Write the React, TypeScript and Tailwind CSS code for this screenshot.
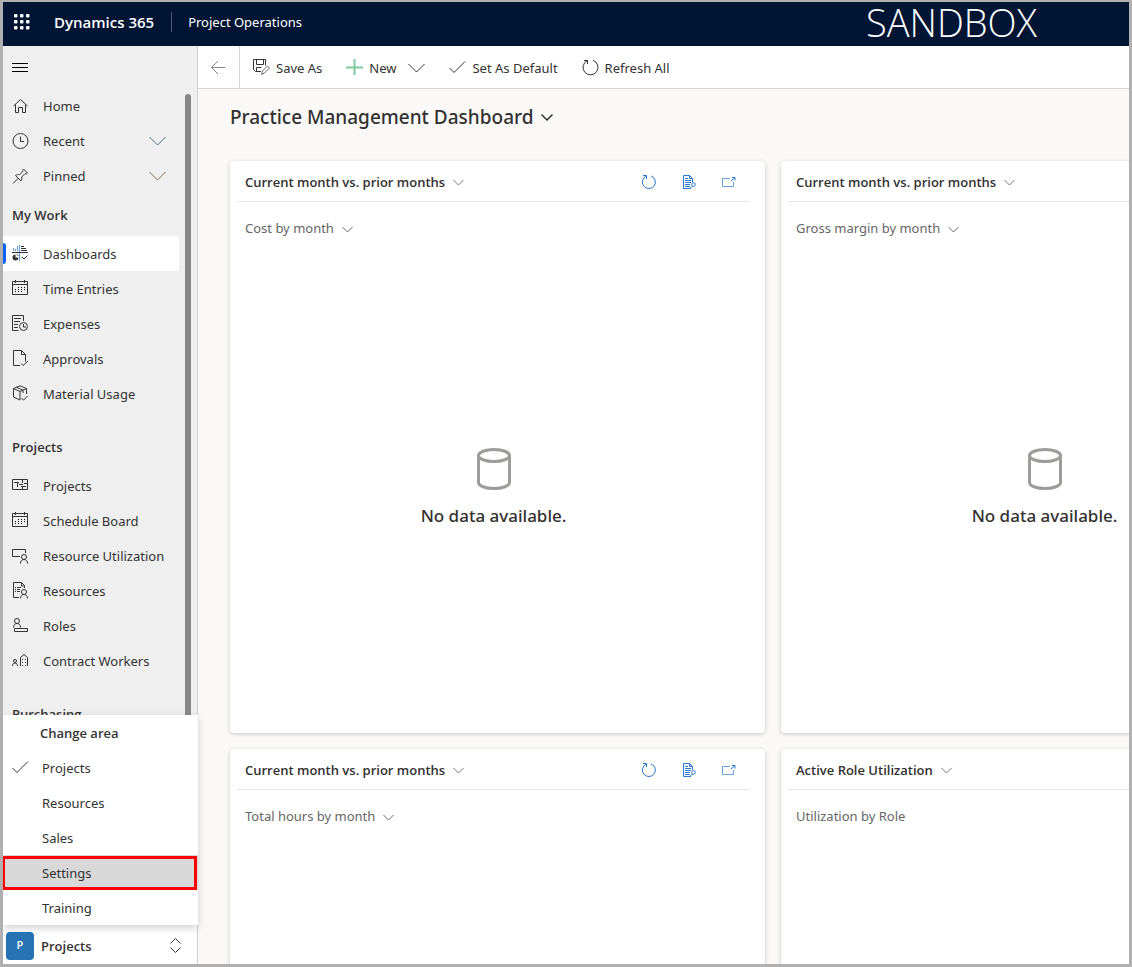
import type { ReactNode } from 'react';

type NavItem = { name: string; icon: ReactNode; active?: boolean };
type ChartCard = {
    title: string;
    chart: string;
    hasMenu: boolean;
    empty: boolean;
};

function Icon({
    children,
    className = '',
}: {
    children: ReactNode;
    className?: string;
}) {
    return (
        <svg
            className={`h-[17px] w-[17px] shrink-0 ${className}`}
            viewBox="0 0 17 17"
            fill="none"
            stroke="currentColor"
            aria-hidden="true"
        >
            {children}
        </svg>
    );
}

const Chevron = ({ className = '' }: { className?: string }) => (
    <Icon className={className}>
        <path d="M.5 5 8.500 13 16.500 5" />
    </Icon>
);

const SmallChevron = ({ className = '' }: { className?: string }) => (
    <svg
        className={`h-[7px] w-[11px] shrink-0 ${className}`}
        viewBox="0 0 11 7"
        fill="none"
        stroke="currentColor"
        aria-hidden="true"
    >
        <path d="M.5 1l5 5 5-5" />
    </svg>
);

const Check = () => (
    <Icon>
        <path d="M.5 9l4.500 4.500L16 2.500" />
    </Icon>
);

const Person = () => (
    <>
        <circle cx="12" cy="10" r="2.500" />
        <path d="M8.500 16.500c0-2.600 1.400-4 3.500-4s3.500 1.400 3.500 4" />
    </>
);

const CalendarIcon = () => (
    <Icon>
        <path d="M.5 1.500h15v13H.5zM.5 4.500h15M3.500 0v3M12.500 0v3" />
        <path
            d="M6 7.500h8M3 9.500h11M3 11.500h8"
            stroke="#000"
            strokeDasharray="1 2"
        />
    </Icon>
);

const quickLinks = [
    {
        name: 'Home',
        expandable: false,
        chevron: '',
        icon: (
            <Icon>
                <path d="M1.500 9 8.500 2.500 15.500 9M3.500 7.500v8h3v-5h4v5h3v-8" />
            </Icon>
        ),
    },
    {
        name: 'Recent',
        expandable: true,
        chevron: 'text-[#4f7187]',
        icon: (
            <Icon>
                <circle cx="8.500" cy="9" r="7.500" />
                <path d="M8.500 4.500v5H12" />
            </Icon>
        ),
    },
    {
        name: 'Pinned',
        expandable: true,
        chevron: 'text-[#80684c]',
        icon: (
            <Icon>
                <path d="M1 16.500 6.500 11M3.500 8.500c1.300-1 2.700-1.200 4-.8l3.300-3.200c-.3-1 0-1.700.7-2.500L15.500 6c-.8.800-1.600 1-2.500.7L9.700 10c.4 1.300.2 2.700-.8 4z" />
            </Icon>
        ),
    },
];

const groups: { title: string; items: NavItem[] }[] = [
    {
        title: 'My Work',
        items: [
            {
                name: 'Dashboards',
                active: true,
                icon: (
                    <Icon>
                        <path
                            d="M1.500 6V3M3.500 6V4M5.500 6V1M7.500 0v16"
                            stroke="#5f9fd6"
                        />
                        <path d="M0 7.500h16M9 1.500h3M9 3.500h5M9 5.500h6M10 12l2 2 3.500-3.500" />
                        <path
                            d="M3.500 9.500v3h3a3 3 0 1 1-3-3z"
                            fill="currentColor"
                            stroke="none"
                        />
                        <path d="M5 9.500l1.500 1.500" />
                    </Icon>
                ),
            },
            { name: 'Time Entries', icon: <CalendarIcon /> },
            {
                name: 'Expenses',
                icon: (
                    <Icon>
                        <path d="M11.500 6V.5H.5v15h6M2 3.500h7M2 6.500h6M2 9.500h4M2 12.500h4" />
                        <circle cx="11.500" cy="11.500" r="4" />
                        <path d="M11.500 9v3H14" />
                    </Icon>
                ),
            },
            {
                name: 'Approvals',
                icon: (
                    <Icon>
                        <path d="M8 15.500H1.500V.5h8l4 4v7M9.500.5v4h4M9 13.500l2 2 5-4.500" />
                    </Icon>
                ),
            },
            {
                name: 'Material Usage',
                icon: (
                    <Icon>
                        <path d="M14.500 9V3.500L8 .8 1.500 3.500v8.500L8 15V6.500L1.500 3.500M8 6.500l6.500-3M4.500 2.200l6.500 3v3M9.500 13l2 2.200 4-4.200" />
                    </Icon>
                ),
            },
        ],
    },
    {
        title: 'Projects',
        items: [
            {
                name: 'Projects',
                icon: (
                    <Icon>
                        <path d="M.5 2.500h15v10H.5zM2 5.500h5M5.500 5v5M7 7.500h4M10.500 3v3M9 9.500h5M10.500 10v2M12 6.500h3" />
                    </Icon>
                ),
            },
            { name: 'Schedule Board', icon: <CalendarIcon /> },
            {
                name: 'Resource Utilization',
                icon: (
                    <Icon>
                        <path d="M8 9.500H.5v-7h13V6" />
                        <Person />
                    </Icon>
                ),
            },
            {
                name: 'Resources',
                icon: (
                    <Icon>
                        <path d="M7 15.500H1.500V.5h8l3 3V6M9.500.5v3.500h3" />
                        <path d="M3 5.500h1M3 7.500h1M3 9.500h1M5 5.500h4M5 7.500h3M5 9.500h3" />
                        <Person />
                    </Icon>
                ),
            },
            {
                name: 'Roles',
                icon: (
                    <Icon>
                        <circle cx="5" cy="4" r="2.500" />
                        <path d="M1.500 10.500c0-2.600 1.400-4 3.500-4s3.500 1.400 3.500 4M2.500 11.500h13v3h-13z" />
                    </Icon>
                ),
            },
            {
                name: 'Contract Workers',
                icon: (
                    <Icon>
                        <circle cx="3" cy="9" r="1.500" />
                        <path d="M.5 14c0-2 1-3 2.500-3s2.500 1 2.500 3M8.500 14V5.500L12 2.500l3.500 3V14" />
                        <path
                            d="M10.500 7v7M13.500 7v7"
                            strokeDasharray="1 2"
                        />
                    </Icon>
                ),
            },
        ],
    },
    { title: 'Purchasing', items: [] },
];

const areas = ['Projects', 'Resources', 'Sales', 'Settings', 'Training'];

const cards: ChartCard[] = [
    {
        title: 'Current month vs. prior months',
        chart: 'Cost by month',
        hasMenu: true,
        empty: true,
    },
    {
        title: 'Current month vs. prior months',
        chart: 'Gross margin by month',
        hasMenu: true,
        empty: true,
    },
    {
        title: 'Current month vs. prior months',
        chart: 'Total hours by month',
        hasMenu: true,
        empty: false,
    },
    {
        title: 'Active Role Utilization',
        chart: 'Utilization by Role',
        hasMenu: false,
        empty: false,
    },
];

function Header() {
    return (
        <header className="flex h-11 shrink-0 items-center bg-[#001433] pb-1 text-white">
            <button
                type="button"
                aria-label="App launcher"
                className="ml-[11px] mr-6"
            >
                <svg
                    className="h-4 w-4"
                    viewBox="0 0 16 16"
                    fill="currentColor"
                    aria-hidden="true"
                >
                    {[0, 6, 12].map((y) =>
                        [0, 6, 12].map((x) => (
                            <rect
                                key={`${x}-${y}`}
                                x={x}
                                y={y}
                                width="3.500"
                                height="3.500"
                                rx="1"
                            />
                        ))
                    )}
                </svg>
            </button>
            <strong className="font-['Open_Sans',sans-serif] text-[15px] font-semibold">
                Dynamics 365
            </strong>
            <span className="ml-[17px] h-5 w-px bg-[#4d5b70]" />
            <span className="ml-4 pt-[2px] text-[13px]">Project Operations</span>
            <span className="ml-auto mr-[92px] font-['Open_Sans',sans-serif] text-[38px] leading-10 font-light">
                SANDBOX
            </span>
        </header>
    );
}

function Sidebar() {
    return (
        <aside className="flex w-[195px] shrink-0 flex-col border-r border-[#d2d0ce] bg-[#efefef] text-[13px] text-[#333]">
            <button
                type="button"
                aria-label="Site map"
                className="flex h-[42px] shrink-0 items-center pl-[9px] text-black"
            >
                <Icon>
                    <path d="M0 4.500h16M0 8.500h16M0 12.500h16" />
                </Icon>
            </button>

            <div className="flex min-h-0 flex-1">
                <nav className="w-[176px] overflow-hidden">
                    {quickLinks.map((link) => (
                        <a
                            key={link.name}
                            href="#"
                            className="flex h-[35px] items-center gap-[14px] pl-[9px] pr-[13px]"
                        >
                            {link.icon}
                            <span className="flex-1 pt-[2px]">{link.name}</span>
                            {link.expandable && (
                                <Chevron className={link.chevron} />
                            )}
                        </a>
                    ))}

                    {groups.map((group, index) => (
                        <div key={group.title} className={index ? 'pt-[14px]' : ''}>
                            <h3 className="flex h-[43px] items-center pt-[2px] pl-[9px] font-['Open_Sans',sans-serif] font-semibold">
                                {group.title}
                            </h3>
                            {group.items.map((item) => (
                                <a
                                    key={item.name}
                                    href="#"
                                    className={`relative flex h-[35px] items-center gap-[14px] pl-[9px] whitespace-nowrap ${
                                        item.active ? 'bg-white' : ''
                                    }`}
                                >
                                    {item.active && (
                                        <span className="absolute top-[7px] left-0 h-[21px] w-[3px] rounded-r-sm bg-[#0b62f5]" />
                                    )}
                                    {item.icon}
                                    <span className="pt-[2px]">{item.name}</span>
                                </a>
                            ))}
                        </div>
                    ))}
                </nav>
                <div className="mt-[6px] ml-[6px] w-[6px] rounded-t-full bg-[#888]" />
            </div>

            <div className="relative h-[39px] shrink-0 bg-white">
                <button
                    type="button"
                    className="flex h-full w-full items-center pt-[2px] pl-[3px] pr-[13px] font-['Open_Sans',sans-serif] font-semibold"
                >
                    <span className="flex h-7 w-7 items-center justify-center rounded-sm bg-[#2773b4] text-[11px] text-white">
                        P
                    </span>
                    <span className="ml-[7px] flex-1 pt-[2px] text-left">
                        Projects
                    </span>
                    <Icon>
                        <path d="M3.500 6.500l5-5 5 5M3.500 10.500l5 5 5-5" />
                    </Icon>
                </button>

                <div className="absolute bottom-full left-0 w-[195px] bg-white shadow-[0_3px_8px_rgba(0,0,0,0.18)]">
                    <h3 className="flex h-[35px] items-center pt-[2px] pl-[37px] font-['Open_Sans',sans-serif] font-semibold">
                        Change area
                    </h3>
                    {areas.map((area) => (
                        <button
                            key={area}
                            type="button"
                            className={`relative flex h-[35px] w-full items-center gap-[13px] pl-[9px] ${
                                area === 'Settings' ? 'bg-[#d8d8d8]' : ''
                            }`}
                        >
                            {area === 'Projects' ? (
                                <Check />
                            ) : (
                                <span className="w-[17px]" />
                            )}
                            <span className="pt-[2px]">{area}</span>
                            {area === 'Settings' && (
                                <span className="absolute top-px right-px bottom-0 -left-px border-3 border-[#fe0000]" />
                            )}
                        </button>
                    ))}
                </div>
            </div>
        </aside>
    );
}

function CommandBar() {
    return (
        <div className="flex h-[43px] shrink-0 border-b border-[#d8d6d4] bg-white text-[13px] text-[#333]">
            <button
                type="button"
                aria-label="Back"
                className="flex w-[42px] items-center justify-center border-r border-[#d8d6d4] text-[#888]"
            >
                <Icon>
                    <path d="M1.500 8.500h14M8 2 1.500 8.500 8 15" />
                </Icon>
            </button>
            <div className="flex items-center gap-6 pl-[13px]">
                <button type="button" className="flex items-center gap-[6px]">
                    <Icon>
                        <path d="M8 12.500H2.500l-2-2V.5h12v6M3.500.5v5h7v-5M3.500 12.500v-4h5" />
                        <path
                            d="M8.500 15.500l1-3.500 5-5 2 2-5 5z"
                            stroke="#666"
                        />
                    </Icon>
                    <span className="pt-[3px]">Save As</span>
                </button>
                <button type="button" className="flex items-center gap-[6px]">
                    <Icon className="text-[#7fcaa2]">
                        <path d="M8.500 0v16M0 8.500h17" strokeWidth="2" />
                    </Icon>
                    <span className="pt-[3px]">New</span>
                    <Chevron className="ml-[6px]" />
                </button>
                <button type="button" className="flex items-center gap-[6px]">
                    <Check />
                    <span className="pt-[3px]">Set As Default</span>
                </button>
                <button type="button" className="flex items-center gap-[6px]">
                    <Icon>
                        <path d="M11 1.300A7.500 7.500 0 1 1 5.500 1.500" />
                        <path d="M2 1.500h3.500V5" />
                    </Icon>
                    <span className="pt-[3px]">Refresh All</span>
                </button>
            </div>
        </div>
    );
}

function Card({ card }: { card: ChartCard }) {
    return (
        <section className="flex h-[572px] flex-col rounded bg-white pr-[15px] pl-[7px] shadow-[0_1px_4px_rgba(0,0,0,0.2)]">
            <div className="flex h-[41px] items-center border-b border-[#e6e6e6] px-2 pt-[2px]">
                <h2 className="pt-[2px] font-['Open_Sans',sans-serif] text-[13px] font-semibold text-[#323130]">
                    {card.title}
                </h2>
                <SmallChevron className="ml-2 text-[#777]" />
                <div className="ml-auto flex items-center gap-6 pr-[5px] text-[#2b78d4]">
                    <button type="button" aria-label="Refresh">
                        <svg
                            className="h-4 w-4"
                            viewBox="0 0 16 16"
                            fill="none"
                            stroke="currentColor"
                        >
                            <path d="M10 1.900A6.500 6.500 0 1 1 5.500 2" />
                            <path d="M2 1.500h3.500V5" />
                        </svg>
                    </button>
                    <button type="button" aria-label="View records">
                        <svg
                            className="h-4 w-4"
                            viewBox="0 0 16 16"
                            fill="none"
                            stroke="currentColor"
                        >
                            <path d="M10 14.500H2.500v-13h6l3 3V8M8.500 1.500v3h3M4 4.500h3M4 6.500h6M4 8.500h6M4 10.500h5M4 12.500h5" />
                            <circle cx="12.500" cy="10.500" r="1.800" />
                            <path d="M11.500 12 9 14.500" />
                        </svg>
                    </button>
                    <button type="button" aria-label="Expand chart">
                        <svg
                            className="h-4 w-4"
                            viewBox="0 0 16 16"
                            fill="none"
                            stroke="currentColor"
                        >
                            <path
                                d="M9 4.500H1.500v8h11V8"
                                stroke="#6a9fe0"
                            />
                            <path d="M10 7l4-3.500M11 3.500h3v3" />
                        </svg>
                    </button>
                </div>
            </div>
            <div className="flex h-[52px] items-center px-2 pt-[2px] text-[13px] text-[#666]">
                {card.chart}
                {card.hasMenu && <SmallChevron className="ml-2" />}
            </div>
            {card.empty && (
                <div className="flex flex-1 flex-col items-center justify-center pb-[10px]">
                    <svg
                        className="h-[42px] w-[34px] text-[#9e9c9a]"
                        viewBox="0 0 34 42"
                        fill="none"
                        stroke="currentColor"
                        strokeWidth="3"
                        aria-hidden="true"
                    >
                        <ellipse cx="17" cy="7.500" rx="15.500" ry="6" />
                        <path d="M1.500 7.500v27c0 3.300 7 6 15.500 6s15.500-2.700 15.500-6v-27" />
                    </svg>
                    <p className="mt-3 text-[17px] leading-7 font-medium text-[#323130]">
                        No data available.
                    </p>
                </div>
            )}
        </section>
    );
}

function App() {
    return (
        <div className="flex h-screen flex-col overflow-hidden border-3 border-t-2 border-[#b0b0b0] bg-[#faf9f8] font-['Noto_Sans','Open_Sans',sans-serif]">
            <Header />
            <div className="flex min-h-0 flex-1">
                <Sidebar />
                <main className="flex min-w-0 flex-1 flex-col overflow-hidden">
                    <CommandBar />
                    <div className="min-h-0 flex-1 overflow-hidden pt-[14px] pl-8">
                        <h1 className="flex h-7 items-center gap-2 text-[19px] font-medium text-[#323130]">
                            Practice Management Dashboard
                            <svg
                                className="h-3 w-3"
                                viewBox="0 0 12 12"
                                fill="none"
                                stroke="currentColor"
                                strokeWidth="1.500"
                                aria-hidden="true"
                            >
                                <path d="M.5 3.500 6 9l5.500-5.500" />
                            </svg>
                        </h1>
                        <div className="mt-[30px] grid grid-cols-[repeat(2,535px)] gap-4">
                            {cards.map((card) => (
                                <Card key={card.chart} card={card} />
                            ))}
                        </div>
                    </div>
                </main>
            </div>
        </div>
    );
}

export default App;
